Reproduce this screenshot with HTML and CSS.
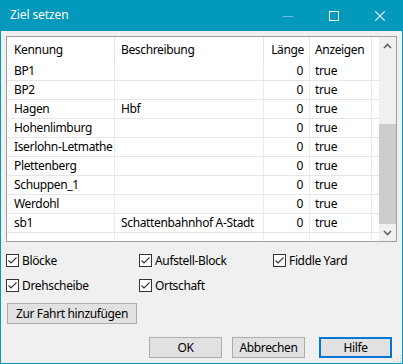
FILE: index.html
```html
<!DOCTYPE html>
<html lang="de">
<head>
<meta charset="utf-8">
<title>Ziel setzen</title>
<link rel="stylesheet" href="styles.css">
</head>
<body>
<div class="window">
  <div class="titlebar">
    <span class="title">Ziel setzen</span>
    <div class="controls">
      <span class="ctl min"><svg width="10" height="10" viewBox="0 0 10 10"><line x1="0" y1="5.5" x2="10" y2="5.5" stroke="#5fc3da" stroke-width="1"/></svg></span>
      <span class="ctl max"><svg width="10" height="10" viewBox="0 0 10 10"><rect x="0.5" y="0.5" width="9" height="9" fill="none" stroke="#fff" stroke-width="1"/></svg></span>
      <span class="ctl close"><svg width="10" height="10" viewBox="0 0 10 10"><path d="M0 0 L10 10 M10 0 L0 10" stroke="#fff" stroke-width="1.1"/></svg></span>
    </div>
  </div>
  <div class="client">
    <div class="tablebox">
      <div class="tablearea">
        <div class="thead">
          <div class="hc">Kennung</div>
          <div class="hc">Beschreibung</div>
          <div class="hc num">Länge</div>
          <div class="hc">Anzeigen</div>
          <div class="hc last"></div>
        </div>
        <div class="row"><div class="c">BP1</div><div class="c"></div><div class="c num">0</div><div class="c">true</div><div class="c last"></div></div>
        <div class="row"><div class="c">BP2</div><div class="c"></div><div class="c num">0</div><div class="c">true</div><div class="c last"></div></div>
        <div class="row"><div class="c">Hagen</div><div class="c">Hbf</div><div class="c num">0</div><div class="c">true</div><div class="c last"></div></div>
        <div class="row"><div class="c">Hohenlimburg</div><div class="c"></div><div class="c num">0</div><div class="c">true</div><div class="c last"></div></div>
        <div class="row"><div class="c">Iserlohn-Letmathe</div><div class="c"></div><div class="c num">0</div><div class="c">true</div><div class="c last"></div></div>
        <div class="row"><div class="c">Plettenberg</div><div class="c"></div><div class="c num">0</div><div class="c">true</div><div class="c last"></div></div>
        <div class="row"><div class="c">Schuppen_1</div><div class="c"></div><div class="c num">0</div><div class="c">true</div><div class="c last"></div></div>
        <div class="row"><div class="c">Werdohl</div><div class="c"></div><div class="c num">0</div><div class="c">true</div><div class="c last"></div></div>
        <div class="row"><div class="c">sb1</div><div class="c">Schattenbahnhof A-Stadt</div><div class="c num">0</div><div class="c">true</div><div class="c last"></div></div>
        <div class="row partial"><div class="c"></div><div class="c"></div><div class="c"></div><div class="c"></div><div class="c last"></div></div>
      </div>
      <div class="scrollbar">
        <div class="arrow"><svg width="9" height="6" viewBox="0 0 9 6"><path d="M1 5 L4.5 1.5 L8 5" fill="none" stroke="#606060" stroke-width="1.6"/></svg></div>
        <div class="track"><div class="thumb"></div></div>
        <div class="arrow"><svg width="9" height="6" viewBox="0 0 9 6"><path d="M1 1 L4.5 4.5 L8 1" fill="none" stroke="#606060" stroke-width="1.6"/></svg></div>
      </div>
    </div>

    <div class="checks">
      <label class="chk"><span class="box"><svg width="11" height="11" viewBox="0 0 11 11"><path d="M1.5 5.5 L4 8 L9.5 2.5" fill="none" stroke="#333" stroke-width="1.1"/></svg></span>Blöcke</label>
      <label class="chk"><span class="box"><svg width="11" height="11" viewBox="0 0 11 11"><path d="M1.5 5.5 L4 8 L9.5 2.5" fill="none" stroke="#333" stroke-width="1.1"/></svg></span>Aufstell-Block</label>
      <label class="chk"><span class="box"><svg width="11" height="11" viewBox="0 0 11 11"><path d="M1.5 5.5 L4 8 L9.5 2.5" fill="none" stroke="#333" stroke-width="1.1"/></svg></span>Fiddle Yard</label>
      <label class="chk"><span class="box"><svg width="11" height="11" viewBox="0 0 11 11"><path d="M1.5 5.5 L4 8 L9.5 2.5" fill="none" stroke="#333" stroke-width="1.1"/></svg></span>Drehscheibe</label>
      <label class="chk"><span class="box"><svg width="11" height="11" viewBox="0 0 11 11"><path d="M1.5 5.5 L4 8 L9.5 2.5" fill="none" stroke="#333" stroke-width="1.1"/></svg></span>Ortschaft</label>
    </div>

    <div class="addrow"><button class="btn add">Zur Fahrt hinzufügen</button></div>

    <div class="buttons">
      <button class="btn ok">OK</button>
      <button class="btn cancel">Abbrechen</button>
      <button class="btn default">Hilfe</button>
    </div>
    <div class="grip"></div>
  </div>
</div>
</body>
</html>
```
FILE: styles.css
```css
* { box-sizing: border-box; }
html, body { margin: 0; padding: 0; }
body {
  width: 403px; height: 364px; overflow: hidden;
  font-family: "Segoe UI", "Noto Sans", sans-serif;
  font-size: 12px; color: #000;
  letter-spacing: -0.35px;
}
.window {
  width: 403px; height: 364px;
  border: 1px solid #0399bc;
  border-top: 0;
  background: #f0f0f0;
  display: flex; flex-direction: column;
  position: relative;
}
.titlebar {
  height: 31px; margin: 0 -1px;
  background: #0399bc;
  display: flex; align-items: center;
  padding-left: 10px;
}
.title { color: #fff; font-size: 12px; flex: 1; position: relative; top: -1px; letter-spacing: -0.1px; }
.controls { display: flex; height: 100%; }
.ctl { width: 46px; display: flex; align-items: center; justify-content: center; }
.client { flex: 1; padding: 5px 5px 0 5px; display: flex; flex-direction: column; position: relative; }
.tablebox {
  height: 206px; border: 1px solid #a0a0a0; background: #fff;
  display: flex;
}
.tablearea { width: 373px; overflow: hidden; }
.thead, .row {
  display: grid;
  grid-template-columns: 108px 149px 46px 62px 8px;
}
.thead { height: 25px; }
.hc { border-right: 1px solid #e5e5e5; padding-left: 7px; line-height: 25px; white-space: nowrap; }
.hc:nth-child(2) { padding-left: 6px; }
.hc:nth-child(4) { padding-left: 5px; }
.hc.num { text-align: right; padding-right: 5px; padding-left: 0; }
.row { height: 19px; border-bottom: 1px solid #e6e6e6; }
.row.partial { height: 8px; border-bottom: 0; }
.c { border-right: 1px solid #e2ebf6; padding-left: 7px; line-height: 18px; white-space: nowrap; overflow: hidden; }
.c:nth-child(2) { padding-left: 6px; }
.c:nth-child(4) { padding-left: 5px; }
.c.num { text-align: right; padding-right: 6px; padding-left: 0; }
.c.last, .hc.last { border-right: 0; }
.scrollbar { width: 17px; background: #f0f0f0; display: flex; flex-direction: column; }
.arrow { height: 17px; display: flex; align-items: center; justify-content: center; }
.track { flex: 1; display: flex; flex-direction: column; justify-content: flex-end; }
.thumb { height: 100px; background: #cdcdcd; }
.checks {
  display: grid; grid-template-columns: 133px 134px 120px;
  row-gap: 12px; margin-top: 12px;
}
.chk { display: flex; align-items: center; height: 13px; white-space: nowrap; }
.box {
  width: 13px; height: 13px; border: 1px solid #333; background: #fff;
  display: flex; align-items: center; justify-content: center; margin-right: 3px;
}
.addrow { margin-top: 11px; padding-left: 1px; }
.btn {
  font-family: inherit; font-size: 12px; color: #000; letter-spacing: -0.35px;
  background: #e1e1e1; border: 1px solid #adadad;
  height: 21px; padding: 0; margin: 0;
}
.add { width: 130px; }
.buttons { display: flex; justify-content: flex-end; margin-top: 13px; padding-right: 5px; }
.buttons .btn { width: 73px; }
.buttons .ok { margin-right: 10px; }
.buttons .cancel { margin-right: 14px; }
.btn.default { border: 2px solid #0078d7; }
.grip {
  position: absolute; right: 1px; bottom: 1px; width: 8px; height: 8px;
  background:
    radial-gradient(circle, #bdbdbd 0.9px, transparent 1px) 0 0 / 3px 3px;
  clip-path: polygon(100% 0, 100% 100%, 0 100%);
}
```
